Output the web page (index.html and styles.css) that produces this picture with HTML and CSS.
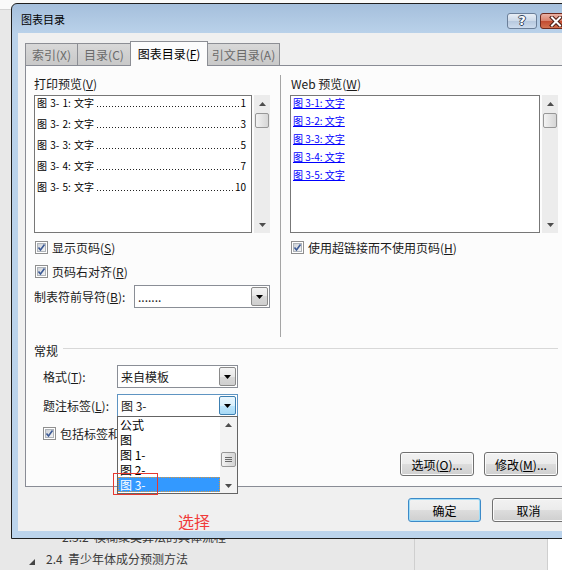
FILE: index.html
```html
<!DOCTYPE html>
<html lang="zh">
<head>
<meta charset="utf-8">
<title>图表目录</title>
<link rel="stylesheet" href="styles.css">
</head>
<body>
<div class="doc">
  <div class="doc-top"></div>
  <div class="doc-body">
    <div class="doc-left">
      <div class="doc-line sub">2.3.2&nbsp;&nbsp;模糊聚类算法的具体流程</div>
      <div class="doc-line main"><span class="tri"></span>2.4&nbsp;&nbsp;青少年体成分预测方法</div>
    </div>
    <div class="doc-cell"></div>
    <div class="doc-white"></div>
  </div>
</div>

<div class="window">
  <div class="titlebar">
    <span class="title">图表目录</span>
    <div class="tbtns">
      <div class="tb help">?</div>
      <div class="tb close"><svg width="14" height="11" viewBox="0 0 14 11"><path d="M3 1.5 L11 9.5 M11 1.5 L3 9.5" stroke="#4a1a12" stroke-width="4" stroke-linecap="square"/><path d="M3 1.5 L11 9.5 M11 1.5 L3 9.5" stroke="#fff" stroke-width="2" stroke-linecap="square"/></svg></div>
    </div>
  </div>
  <div class="client">
    <div class="tabs">
      <div class="tab t1">索引(X)</div>
      <div class="tab t2">目录(C)</div>
      <div class="tab t3 active">图表目录(<u>F</u>)</div>
      <div class="tab t4">引文目录(A)</div>
    </div>
    <div class="panel">
      <div class="cols">
        <div class="col left">
          <div class="ptitle">打印预览(<u>V</u>)</div>
          <div class="lw">
            <div class="lbox">
              <div class="pitem"><span>图 3- 1: 文字</span><span class="lead"></span><span>1</span></div>
              <div class="pitem"><span>图 3- 2: 文字</span><span class="lead"></span><span>3</span></div>
              <div class="pitem"><span>图 3- 3: 文字</span><span class="lead"></span><span>5</span></div>
              <div class="pitem"><span>图 3- 4: 文字</span><span class="lead"></span><span>7</span></div>
              <div class="pitem"><span>图 3- 5: 文字</span><span class="lead"></span><span>10</span></div>
            </div>
            <div class="vscroll">
              <div class="arr"><svg width="7" height="4" viewBox="0 0 7 4"><path d="M0 4 L3.5 0 L7 4Z" fill="#4d4d4d"/></svg></div>
              <div class="thumb"></div>
              <div class="track"></div>
              <div class="arr"><svg width="7" height="4" viewBox="0 0 7 4"><path d="M0 0 L3.5 4 L7 0Z" fill="#4d4d4d"/></svg></div>
            </div>
          </div>
          <label class="chk c1"><svg width="13" height="13" viewBox="0 0 13 13"><defs><linearGradient id="cg" x1="0" y1="0" x2="1" y2="1"><stop offset="0" stop-color="#cbcfd5"/><stop offset="1" stop-color="#f6f6f6"/></linearGradient></defs><rect x="0.5" y="0.5" width="12" height="12" fill="#fff" stroke="#8f8f8f"/><rect x="2.5" y="2.5" width="8" height="8" fill="url(#cg)" stroke="#aeb3b9"/><path d="M3.5 6.5 L5.5 9 L9.5 3.5" fill="none" stroke="#3c5a96" stroke-width="1.6"/></svg><span>显示页码(<u>S</u>)</span></label>
          <label class="chk c2"><svg width="13" height="13" viewBox="0 0 13 13"><rect x="0.5" y="0.5" width="12" height="12" fill="#fff" stroke="#8f8f8f"/><rect x="2.5" y="2.5" width="8" height="8" fill="url(#cg)" stroke="#aeb3b9"/><path d="M3.5 6.5 L5.5 9 L9.5 3.5" fill="none" stroke="#3c5a96" stroke-width="1.6"/></svg><span>页码右对齐(<u>R</u>)</span></label>
          <div class="frow">
            <span class="flabel">制表符前导符(<u>B</u>):</span>
            <div class="combo fill">
              <span class="val">.......</span>
              <span class="dd"><svg width="7" height="4" viewBox="0 0 7 4"><path d="M0 0 L3.5 4 L7 0Z" fill="#000"/></svg></span>
            </div>
          </div>
        </div>
        <div class="vsep"></div>
        <div class="col right">
          <div class="ptitle">Web 预览(<u>W</u>)</div>
          <div class="lw">
            <div class="lbox web">
              <div class="witem">图 3-1: 文字</div>
              <div class="witem">图 3-2: 文字</div>
              <div class="witem">图 3-3: 文字</div>
              <div class="witem">图 3-4: 文字</div>
              <div class="witem">图 3-5: 文字</div>
            </div>
            <div class="vscroll">
              <div class="arr"><svg width="7" height="4" viewBox="0 0 7 4"><path d="M0 4 L3.5 0 L7 4Z" fill="#4d4d4d"/></svg></div>
              <div class="thumb"></div>
              <div class="track"></div>
              <div class="arr"><svg width="7" height="4" viewBox="0 0 7 4"><path d="M0 0 L3.5 4 L7 0Z" fill="#4d4d4d"/></svg></div>
            </div>
          </div>
          <label class="chk c1"><svg width="13" height="13" viewBox="0 0 13 13"><rect x="0.5" y="0.5" width="12" height="12" fill="#fff" stroke="#8f8f8f"/><rect x="2.5" y="2.5" width="8" height="8" fill="url(#cg)" stroke="#aeb3b9"/><path d="M3.5 6.5 L5.5 9 L9.5 3.5" fill="none" stroke="#3c5a96" stroke-width="1.6"/></svg><span>使用超链接而不使用页码(<u>H</u>)</span></label>
        </div>
      </div>

      <div class="ghead"><span>常规</span><i></i></div>
      <div class="grow g1">
        <span class="glabel">格式(<u>T</u>):</span>
        <div class="combo w">
          <span class="val">来自模板</span>
          <span class="dd"><svg width="7" height="4" viewBox="0 0 7 4"><path d="M0 0 L3.5 4 L7 0Z" fill="#000"/></svg></span>
        </div>
      </div>
      <div class="grow g2">
        <span class="glabel">题注标签(<u>L</u>):</span>
        <div class="combo w hot">
          <span class="val">图 3-</span>
          <span class="dd"><svg width="7" height="4" viewBox="0 0 7 4"><path d="M0 0 L3.5 4 L7 0Z" fill="#000"/></svg></span>
          <div class="ddlist">
            <div class="ddi-list">
              <div class="ddi">公式</div>
              <div class="ddi">图</div>
              <div class="ddi">图 1-</div>
              <div class="ddi">图 2-</div>
              <div class="ddi sel">图 3-</div>
            </div>
            <div class="ddscroll">
              <div class="sarr"><svg width="7" height="4" viewBox="0 0 7 4"><path d="M0 4 L3.5 0 L7 4Z" fill="#4d4d4d"/></svg></div>
              <div class="sgap"></div>
              <div class="sthumb"><i></i><i></i><i></i></div>
              <div class="strack"></div>
              <div class="sarr"><svg width="7" height="4" viewBox="0 0 7 4"><path d="M0 0 L3.5 4 L7 0Z" fill="#4d4d4d"/></svg></div>
            </div>
            <div class="mark"></div>
          </div>
        </div>
      </div>
      <label class="chk c3"><svg width="13" height="13" viewBox="0 0 13 13"><rect x="0.5" y="0.5" width="12" height="12" fill="#fff" stroke="#8f8f8f"/><rect x="2.5" y="2.5" width="8" height="8" fill="url(#cg)" stroke="#aeb3b9"/><path d="M3.5 6.5 L5.5 9 L9.5 3.5" fill="none" stroke="#3c5a96" stroke-width="1.6"/></svg><span>包括标签和编号(<u>N</u>)</span></label>
      <div class="pbtns">
        <div class="btn">选项(<u>O</u>)...</div>
        <div class="btn">修改(<u>M</u>)...</div>
      </div>
    </div>
    <div class="dbtns">
      <div class="btn ok">确定</div>
      <div class="btn cancel">取消</div>
    </div>
  </div>
</div>

<div class="note">选择</div>
</body>
</html>
```

FILE: styles.css
```css
* { box-sizing: border-box; }
html, body { margin: 0; padding: 0; }
body {
  width: 562px;
  height: 570px;
  overflow: hidden;
  position: relative;
  background: #e8e8e8;
  font-family: "Noto Sans CJK SC", "Noto Sans", sans-serif;
  font-size: 12px;
  color: #1a1a1a;
}
u { text-decoration: underline; text-underline-offset: 1px; }

/* background document */
.doc { height: 570px; display: flex; flex-direction: column; }
.doc-top { height: 10px; background: #fafafa; border-bottom: 1px solid #d4d4d4; }
.doc-body { flex: 1; display: flex; }
.doc-left { width: 414px; display: flex; flex-direction: column; justify-content: flex-end; }
.doc-line {
  height: 22px;
  line-height: 22px;
  font-size: 12px;
  color: #3a3a3a;
  display: flex;
  align-items: center;
  white-space: nowrap;
}
.doc-line.sub { padding-left: 62px; }
.doc-line.main { padding-left: 29px; }
.tri {
  width: 0; height: 0;
  border-left: 6px solid transparent;
  border-bottom: 6px solid #444;
  margin: 6px 11px 0 0;
}
.doc-cell { width: 134px; border-left: 1px solid #cfcfcf; border-right: 1px solid #cfcfcf; }
.doc-white { flex: 1; background: #fff; }

/* window */
.window {
  position: absolute;
  left: 11px;
  top: 3px;
  width: 568px;
  height: 536px;
  border: 1px solid #1f1f1f;
  border-radius: 6px 6px 0 0;
  background: linear-gradient(#a5bfdc, #bad2ea 30px, #bcd4ec);
  padding: 0 6px 7px;
  display: flex;
  flex-direction: column;
  z-index: 2;
}
.titlebar { height: 29px; display: flex; align-items: center; flex: none; }
.title { padding-left: 3px; font-size: 11px; color: #000; }
.tbtns { margin-left: auto; align-self: flex-start; margin-top: 9px; display: flex; gap: 3px; }
.tb { height: 16px; border-radius: 3px; display: flex; align-items: center; justify-content: center; }
.help {
  width: 30px;
  border: 1px solid #6b7f99;
  background: linear-gradient(#e8eef6, #ccd9e9 50%, #b6c8de 50%, #cddcee);
  color: #fff;
  font-weight: bold;
  font-size: 13px;
  line-height: 14px;
  font-family: "DejaVu Sans", sans-serif;
  text-shadow: 1px 0 0 #34475f, -1px 0 0 #34475f, 0 1px 0 #34475f, 0 -1px 0 #34475f;
}
.close {
  width: 32px;
  border: 1px solid #6e2a1e;
  background: linear-gradient(#eab1a4, #d9806a 50%, #c24a30 50%, #d3714f);
}

.client {
  flex: 1;
  background: #f0f0f0;
  padding: 8px 7px 0;
  display: flex;
  flex-direction: column;
}

/* tabs */
.tabs { height: 25px; display: flex; align-items: flex-end; flex: none; }
.tab {
  height: 23px;
  border: 1px solid #8c8e94;
  border-bottom: none;
  background: linear-gradient(#d8d8d8, #c8c8c8);
  color: #6a6a6a;
  line-height: 21px;
  text-align: center;
  margin-right: -1px;
  white-space: nowrap;
}
.t1 { width: 53px; }
.t2 { width: 54px; }
.t3 { width: 78px; }
.t4 { width: 73px; }
.tab.active {
  height: 25px;
  line-height: 23px;
  background: #fcfcfc;
  color: #000;
  position: relative;
  z-index: 1;
}

/* panel */
.panel {
  margin-top: -1px;
  height: 422px;
  flex: none;
  border: 1px solid #898c95;
  background: #fcfcfc;
  padding: 10px 6px 0 8px;
  position: relative;
}
.cols { display: flex; height: 261px; }
.col.left { width: 236px; }
.col.right { flex: 1; }
.vsep { width: 1px; background: #a5a5a5; margin: -1px 9px 0 10px; height: 262px; }
.ptitle { height: 16px; line-height: 16px; margin-bottom: 3px; white-space: nowrap; }
.right .ptitle { padding-left: 1px; }
.lw { display: flex; height: 138px; }
.lbox { flex: 1; border: 1px solid #777; background: #fff; padding: 0 5px 0 2px; }
.lbox.web { padding: 0 2px; }
.vscroll { width: 16px; margin-left: 2px; background: #ececec; display: flex; flex-direction: column; }
.arr { height: 17px; display: flex; align-items: center; justify-content: center; }
.thumb {
  height: 15px;
  margin: 1px 1px 0;
  border: 1px solid #979797;
  border-radius: 2px;
  background: linear-gradient(90deg, #f3f3f3, #e4e4e4 50%, #d6d6d6);
}
.track { flex: 1; }

.pitem {
  display: flex;
  align-items: baseline;
  height: 14px;
  line-height: 14px;
  margin-bottom: 7px;
  font-size: 10px;
  color: #000;
  white-space: pre;
  word-spacing: 1px;
}
.pitem .lead {
  flex: 1;
  height: 1px;
  margin: 0 1px 3px 3px;
  align-self: flex-end;
  background: repeating-linear-gradient(90deg, #222 0 1px, transparent 1px 3px);
}
.witem {
  height: 14px;
  line-height: 14px;
  margin-bottom: 4px;
  font-size: 10px;
  color: #0000ff;
  text-decoration: underline;
  white-space: pre;
}

/* checkboxes */
.chk { display: flex; align-items: center; height: 16px; gap: 4px; white-space: nowrap; }
.chk svg { margin-left: 1px; flex: none; }
.chk.c1 { margin-top: 6px; }
.chk.c2 { margin-top: 8px; }
.chk.c3 { margin-top: 8px; padding-left: 8px; }

/* combos */
.frow { display: flex; align-items: center; margin-top: 6px; height: 23px; }
.flabel { width: 100px; white-space: nowrap; }
.combo {
  height: 23px;
  border: 1px solid #8a8e96;
  background: #fff;
  display: flex;
  align-items: center;
  padding: 1px;
  position: relative;
}
.combo.fill { flex: 1; }
.combo.w { width: 121px; }
.combo .val { flex: 1; padding-left: 2px; white-space: nowrap; }
.combo .dd {
  width: 17px;
  height: 19px;
  border: 1px solid #8a8a8a;
  border-radius: 2px;
  background: linear-gradient(#f4f4f4, #e8e8e8 50%, #d8d8d8 50%, #cfcfcf);
  display: flex;
  align-items: center;
  justify-content: center;
}
.combo.hot { border-color: #5e94c2; }
.combo.hot .dd {
  border-color: #3c7fb1;
  background: linear-gradient(#eaf6fd, #d9f0fc 50%, #bee6fd 50%, #a7d9f5);
}

.ghead { display: flex; align-items: center; height: 16px; margin-top: 5px; }
.ghead i { flex: 1; height: 1px; background: #d8d8d8; margin: -3px 0 0 5px; }
.grow { display: flex; align-items: center; height: 23px; padding-left: 9px; }
.grow.g1 { margin-top: 7px; }
.grow.g2 { margin-top: 6px; }
.glabel { width: 74px; white-space: nowrap; }

/* open drop-down list */
.ddlist {
  position: absolute;
  left: -1px;
  top: 100%;
  width: 121px;
  height: 78px;
  border: 1px solid #646464;
  background: #fff;
  display: flex;
  z-index: 3;
}
.ddi-list { flex: 1; }
.ddi { height: 15px; line-height: 15px; padding-left: 2px; white-space: nowrap; color: #000; }
.ddi.sel { background: #3399ff; color: #fff; outline: 1px dotted #d8963e; outline-offset: -1px; }
.ddscroll { width: 17px; background: #f3f3f3; display: flex; flex-direction: column; }
.sarr { height: 15px; display: flex; align-items: center; justify-content: center; }
.sgap { height: 20px; }
.sthumb {
  height: 15px;
  margin: 0 1px;
  border: 1px solid #979797;
  border-radius: 2px;
  background: linear-gradient(90deg, #f3f3f3, #e2e2e2 50%, #d4d4d4);
  display: flex;
  flex-direction: column;
  justify-content: center;
  align-items: center;
  gap: 1px;
}
.sthumb i { width: 7px; height: 1px; background: #6a6a6a; }
.strack { flex: 1; }
.mark {
  position: absolute;
  left: -5px;
  top: 56px;
  width: 45px;
  height: 22px;
  border: 1px solid #e8392f;
}

/* buttons */
.btn {
  height: 24px;
  border: 1px solid #707070;
  border-radius: 3px;
  background: linear-gradient(#f2f2f2, #ebebeb 50%, #dddddd 50%, #cfcfcf);
  box-shadow: inset 0 0 0 1px #fbfbfb;
  display: flex;
  align-items: center;
  justify-content: center;
  color: #000;
  white-space: nowrap;
}
.pbtns { display: flex; justify-content: flex-end; gap: 10px; margin-top: 11px; }
.pbtns .btn { width: 74px; }
.dbtns { display: flex; justify-content: flex-end; gap: 11px; margin-top: 11px; }
.dbtns .btn { width: 73px; }
.btn.ok { border-color: #3c8ac8; box-shadow: inset 0 0 0 1px #9fdcf7; }

.note {
  position: absolute;
  left: 178px;
  top: 511px;
  font-size: 16px;
  line-height: 20px;
  color: #f03a3a;
  z-index: 4;
}
```
